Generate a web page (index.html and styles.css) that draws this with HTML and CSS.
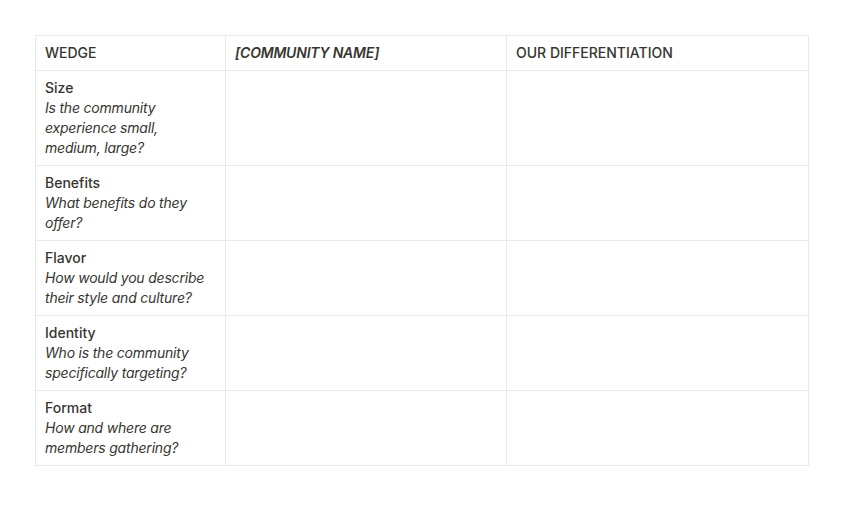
FILE: index.html
```html
<!DOCTYPE html>
<html>
<head>
<meta charset="utf-8">
<link rel="stylesheet" href="styles.css">
</head>
<body>
<div class="page">
<table class="grid">
  <colgroup>
    <col class="c1"><col class="c2"><col class="c3">
  </colgroup>
  <thead>
    <tr><th>WEDGE</th><th class="em">[COMMUNITY NAME]</th><th>OUR DIFFERENTIATION</th></tr>
  </thead>
  <tbody>
    <tr><td><div class="label">Size</div><div class="q">Is the community experience small, medium, large?</div></td><td></td><td></td></tr>
    <tr><td><div class="label">Benefits</div><div class="q">What benefits do they offer?</div></td><td></td><td></td></tr>
    <tr><td><div class="label">Flavor</div><div class="q">How would you describe their style and culture?</div></td><td></td><td></td></tr>
    <tr><td><div class="label">Identity</div><div class="q">Who is the community specifically targeting?</div></td><td></td><td></td></tr>
    <tr><td><div class="label">Format</div><div class="q">How and where are members gathering?</div></td><td></td><td></td></tr>
  </tbody>
</table>
</div>
</body>
</html>
```
FILE: styles.css
```css
html, body { margin: 0; padding: 0; background: #fff; }
body {
  font-family: Inter, "Noto Sans", sans-serif;
  font-size: 14px;
  line-height: 20px;
  color: #37352f;
}
.page { padding: 35px 0 0 35px; }
.grid {
  border-collapse: collapse;
  table-layout: fixed;
  width: 773px;
}
.c1 { width: 190px; }
.c2 { width: 281px; }
.c3 { width: 302px; }
.grid th, .grid td {
  border: 1px solid #e9e9e7;
  padding: 7px 9px;
  text-align: left;
  vertical-align: top;
}
.grid th { font-weight: 500; }
.grid th.em { font-style: italic; font-weight: 600; letter-spacing: -0.2px; }
.label { font-weight: 500; }
.q { font-style: italic; letter-spacing: -0.2px; }
```
